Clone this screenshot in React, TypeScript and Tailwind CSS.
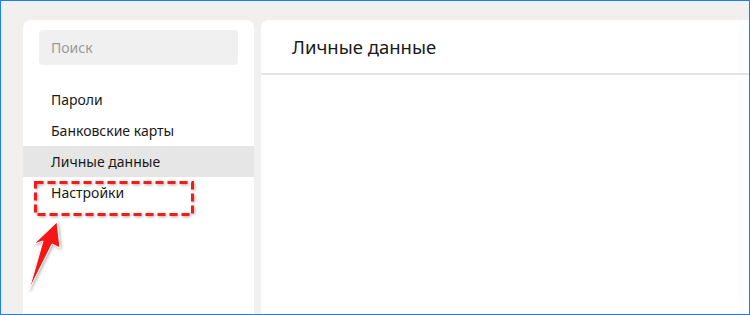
import React from "react";

const menuItems = ["Пароли", "Банковские карты", "Личные данные", "Настройки"];
const activeItem = "Личные данные";

const Annotation = () => (
  <svg
    className="absolute left-0 top-0 pointer-events-none"
    width="750"
    height="315"
    viewBox="0 0 750 315"
  >
    <defs>
      <filter id="soft" x="-20%" y="-20%" width="140%" height="140%">
        <feDropShadow dx="1" dy="1" stdDeviation="1.5" floodColor="#000" floodOpacity="0.35" />
      </filter>
    </defs>
    <rect
      x="34.5"
      y="181.5"
      width="157"
      height="32"
      fill="none"
      stroke="#f21d1d"
      strokeWidth="3"
      strokeDasharray="8 4"
      filter="url(#soft)"
    />
    <polygon
      points="56,221 59,247 51,243 28,289 42,240 33,243"
      fill="#f51414"
      stroke="#fff"
      strokeWidth="1"
      strokeLinejoin="round"
      filter="url(#soft)"
    />
  </svg>
);

const Sidebar = () => (
  <aside className="w-[231px] shrink-0 bg-white rounded-t-lg pt-[10px] flex flex-col">
    <div className="mx-[16px] h-[35px] rounded bg-[#f0f0f0] pl-[12px] flex items-center text-[14px] text-[#9a9a9a]">
      Поиск
    </div>
    <nav className="mt-[19px] flex flex-col">
      {menuItems.map((item) => (
        <div
          key={item}
          className={
            item === activeItem
              ? "h-[31px] pl-[28px] flex items-center text-[14px] text-[#1a1a1a] bg-[#e6e6e6]"
              : "h-[31px] pl-[28px] flex items-center text-[14px] text-[#1a1a1a]"
          }
        >
          {item}
        </div>
      ))}
    </nav>
  </aside>
);

export default function App() {
  return (
    <div
      className="relative w-[750px] h-[315px] overflow-hidden border border-[#1a7ff0] bg-[#f1f0ee] pt-[19px] pl-[22px] flex gap-[7px]"
      style={{ fontFamily: '"Noto Sans", "Open Sans", sans-serif' }}
    >
      <Sidebar />
      <main className="flex-1 bg-white rounded-tl-lg flex flex-col">
        <header className="h-[55px] border-b-2 border-[#e4e4e4] pl-[31px] flex items-center text-[18.5px] text-[#1a1a1a]">
          Личные данные
        </header>
      </main>
      <Annotation />
    </div>
  );
}
